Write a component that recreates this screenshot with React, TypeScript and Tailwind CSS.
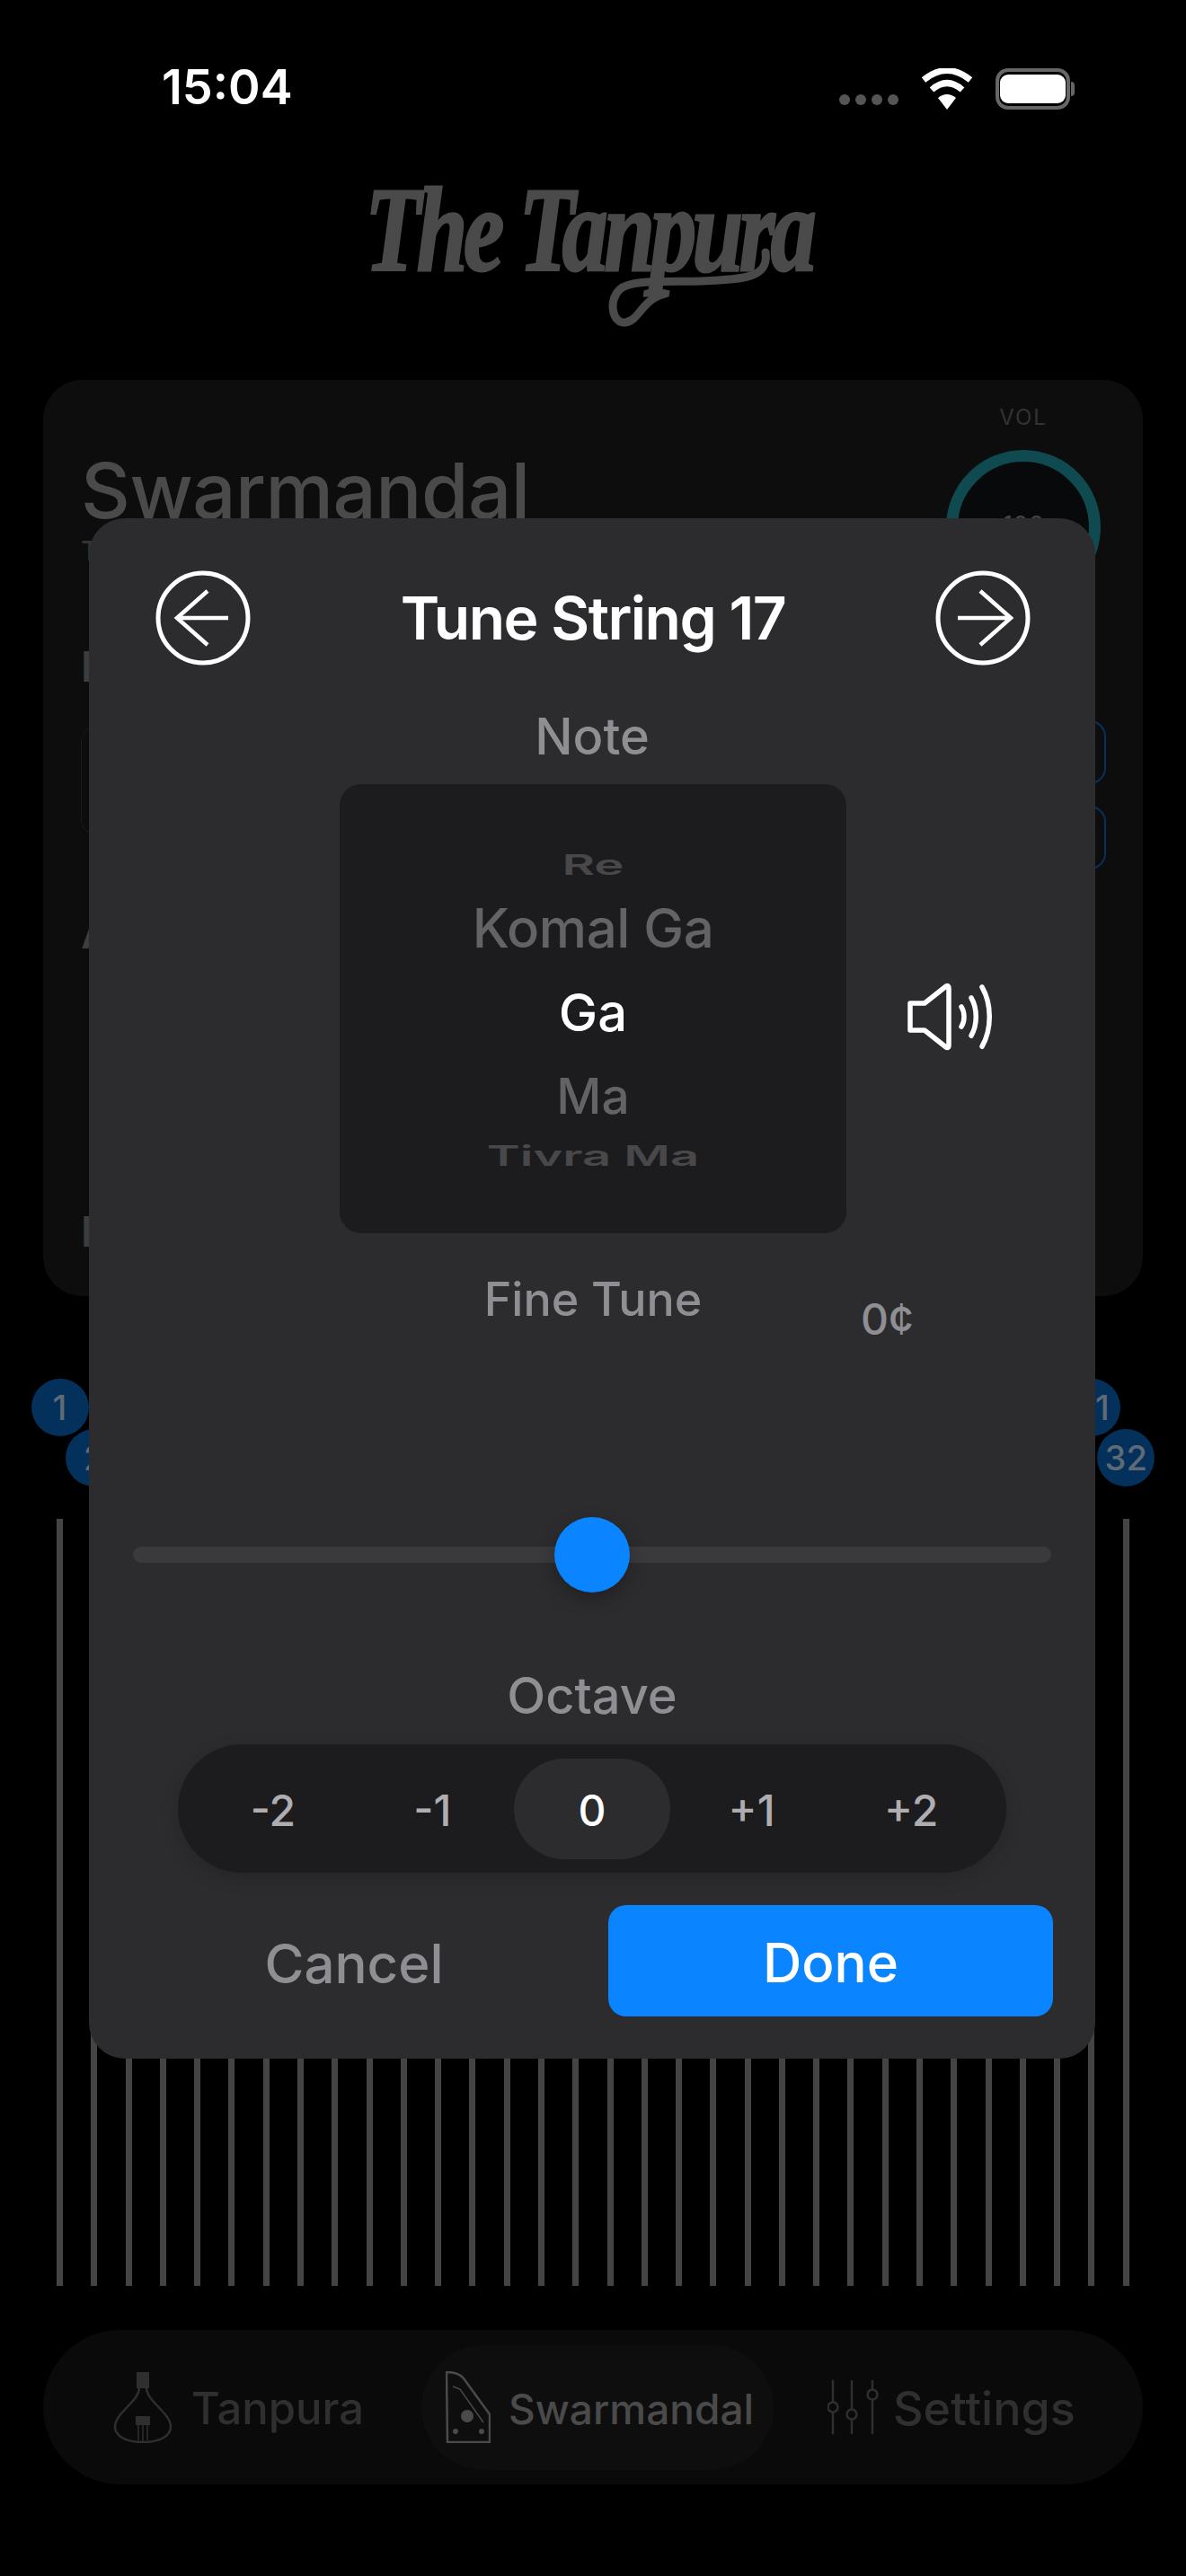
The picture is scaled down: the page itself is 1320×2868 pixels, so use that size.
const SANS = "font-['Inter','Noto_Sans',sans-serif]";

const STRINGS = Array.from({ length: 32 }, (_, i) => i + 1);
const OCTAVES = ["-2", "-1", "0", "+1", "+2"];

function StatusBar() {
  return (
    <div className="flex h-[190px] items-start justify-between pl-[180px] pr-[124px] pt-[68px]">
      <span className="text-[54px] font-semibold leading-[58px] text-white">15:04</span>
      <div className="flex items-center pt-[8px]">
        <div className="mt-[24px] flex gap-[6px]">
          <span className="h-[12px] w-[12px] rounded-full bg-[#555]" />
          <span className="h-[12px] w-[12px] rounded-full bg-[#555]" />
          <span className="h-[12px] w-[12px] rounded-full bg-[#555]" />
          <span className="h-[12px] w-[12px] rounded-full bg-[#555]" />
        </div>
        <svg width="58" height="46" viewBox="0 0 58 46" className="ml-[25px]">
          <path d="M29 46 L19 33 Q29 25 39 33 Z" fill="#fff" />
          <path d="M12 24 Q29 9 46 24" fill="none" stroke="#fff" strokeWidth="7" />
          <path d="M3 13 Q29 -8 55 13" fill="none" stroke="#fff" strokeWidth="7" />
        </svg>
        <div className="ml-[25px] flex items-center">
          <div className="flex h-[46px] w-[83px] items-center justify-center rounded-[14px] border-[4px] border-[#666]">
            <div className="h-[32px] w-[73px] rounded-[9px] bg-white" />
          </div>
          <div className="ml-[1px] h-[16px] w-[4px] rounded-r-full bg-[#666]" />
        </div>
      </div>
    </div>
  );
}

function Logo() {
  return (
    <div className="flex h-[233px] justify-center">
      <div className="relative mr-[120px] h-[190px] w-[510px]">
        <span className="block origin-center scale-x-[0.76] whitespace-nowrap pt-[7px] text-center font-['Liberation_Serif',serif] text-[134px] font-bold italic leading-[118px] tracking-[-6px] text-[#4a4a4a] [-webkit-text-stroke:3px_#4a4a4a]">
          The Tanpura
        </span>
        <svg width="240" height="120" viewBox="0 0 240 120" className="absolute left-[285px] top-[59px]">
          <path
            d="M222 32 C226 60 200 62 150 64 C110 65 72 62 60 73 C46 86 52 112 66 110 C82 108 84 84 110 78"
            fill="none"
            stroke="#4a4a4a"
            strokeWidth="9"
            strokeLinecap="round"
          />
        </svg>
      </div>
    </div>
  );
}

function BackgroundCard() {
  return (
    <div className="relative mx-12 h-[1020px] rounded-[44px] bg-[#0d0d0e] pl-[42px] pt-[82px]">
      <div className="text-[85px] font-medium leading-[84px] tracking-[-0.5px] text-[#4a4a4a]">Swarmandal</div>
      <div className="mt-[6px] text-[30px] font-medium leading-[36px] text-[#333]">Tap a string</div>
      <div className="mt-[86px] text-[46px] font-semibold leading-[50px] text-[#3d3d3d]">Pattern</div>
      <div className="mt-[42px] h-[120px] w-[300px] rounded-[16px] border border-[#1a1a1a]" />
      <div className="mt-[81px] text-[50px] font-semibold leading-[56px] text-[#3d3d3d]">Auto</div>
      <div className="mt-[280px] text-[46px] font-semibold leading-[50px] text-[#3d3d3d]">Preset</div>

      <div className="absolute right-[47px] top-[30px] flex w-[172px] flex-col items-center">
        <span className="text-[24px] leading-[24px] tracking-[2px] text-[#333]">VOL</span>
        <div className="mt-[24px] flex h-[172px] w-[172px] items-start justify-center rounded-full border-[13px] border-[#0e4a50] bg-[#08090a] pt-[50px] text-[28px] text-[#444]">
          100
        </div>
      </div>
      <div className="absolute right-[41px] top-[379px] h-[71px] w-[200px] rounded-[18px] border-[2px] border-[#07305a]" />
      <div className="absolute right-[41px] top-[474px] h-[71px] w-[200px] rounded-[18px] border-[2px] border-[#07305a]" />
    </div>
  );
}

function StringRack() {
  return (
    <div className="flex justify-between pl-[63px] pr-[63px] pt-[92px]">
      {STRINGS.map((n) => (
        <div key={n} className="flex w-[7px] flex-col items-center">
          <div className="flex h-[156px] flex-col">
            <div
              className={`flex h-[64px] w-[64px] shrink-0 items-center justify-center self-center rounded-full bg-[#04305c] text-[38px] font-medium text-[#5f6a75] ${
                n % 2 === 0 ? "mt-[56px]" : ""
              }`}
            >
              {n}
            </div>
          </div>
          <div className="h-[854px] w-[7px] shrink-0 bg-[#444]" />
        </div>
      ))}
    </div>
  );
}

function TanpuraIcon() {
  return (
    <svg width="66" height="80" viewBox="0 0 66 80" fill="none" stroke="#2f2f2f" strokeWidth="2.5">
      <rect x="26" y="1" width="14" height="18" fill="#2f2f2f" stroke="none" />
      <path d="M29 18 C29 34 2 46 2 62 C2 72 14 79 33 79 C52 79 64 72 64 62 C64 46 37 34 37 18" />
      <rect x="25" y="50" width="16" height="10" fill="#2f2f2f" stroke="none" />
      <path d="M28 60 V77 M33 60 V78 M38 60 V77" strokeWidth="1.5" />
    </svg>
  );
}

function SwarmandalIcon() {
  return (
    <svg width="50" height="80" viewBox="0 0 50 80" fill="none" stroke="#4a4a4a" strokeWidth="2.5">
      <path d="M1 1 L2 79 H49 V48 L20 8 C16 3 8 1 1 1 Z" />
      <path d="M8 17 L16 20 L42 57" strokeWidth="1.5" />
      <circle cx="24" cy="50" r="7" fill="#4a4a4a" stroke="none" />
      <circle cx="11" cy="67" r="3" fill="#4a4a4a" stroke="none" />
      <circle cx="40" cy="67" r="3" fill="#4a4a4a" stroke="none" />
    </svg>
  );
}

function SettingsIcon() {
  return (
    <svg width="58" height="60" viewBox="0 0 58 60" fill="none" stroke="#2f2f2f" strokeWidth="2.5">
      <path d="M6 0 V24 M6 36 V60 M27 0 V32 M27 44 V60 M50 0 V10 M50 22 V60" />
      <circle cx="6" cy="30" r="5.5" />
      <circle cx="27" cy="38" r="5.5" />
      <circle cx="50" cy="16" r="5.5" />
    </svg>
  );
}

function TabBar() {
  return (
    <div className="mx-12 mt-[49px] flex h-[172px] items-center rounded-[86px] bg-[#0a0a0a] pl-[78px]">
      <TanpuraIcon />
      <span className="ml-[21px] pt-[4px] text-[49px] font-medium text-[#2f2f2f]">Tanpura</span>
      <div className="ml-[64px] flex h-[139px] w-[392px] items-center rounded-[70px] bg-[#0e0e0e] pl-[27px]">
        <SwarmandalIcon />
        <span className="ml-[20px] pt-[4px] text-[46px] font-medium text-[#4a4a4a]">Swarmandal</span>
      </div>
      <div className="ml-[60px]">
        <SettingsIcon />
      </div>
      <span className="ml-[15px] pt-[4px] text-[52px] font-medium text-[#2f2f2f]">Settings</span>
    </div>
  );
}

function ArrowButton({ dir }: { dir: "left" | "right" }) {
  return (
    <svg width="106" height="106" viewBox="0 0 106 106" fill="none" stroke="#fff" strokeWidth="5">
      <circle cx="53" cy="53" r="50" />
      {dir === "left" ? (
        <path d="M81 53 H24 M58 23 L24 53 L58 83" strokeWidth="4.5" />
      ) : (
        <path d="M25 53 H84 M50 23 L84 53 L50 83" strokeWidth="4.5" />
      )}
    </svg>
  );
}

function SpeakerIcon() {
  return (
    <svg width="96" height="76" viewBox="0 0 96 76" fill="none" stroke="#fff" strokeWidth="5.5" strokeLinecap="round" strokeLinejoin="round">
      <path d="M3 23 H19 L43 4 C45 3 46 4 46 6 V70 C46 72 45 73 43 72 L19 53 H3 Z" />
      <path d="M60 27 C64 33 64 43 60 49" />
      <path d="M71 17 C78 29 78 47 71 59" />
      <path d="M83 5 C94 24 94 52 83 71" />
    </svg>
  );
}

function NotePicker() {
  return (
    <div className="flex h-[500px] flex-col items-center rounded-[24px] bg-[#1c1c1e] pt-[70px] font-medium">
      <span className="h-[40px] origin-center scale-y-[0.55] text-[56px] font-semibold leading-[40px] text-[#48484a]">Re</span>
      <span className="mt-[20px] h-[60px] text-[60px] leading-[60px] tracking-[-0.5px] text-[#636366]">Komal Ga</span>
      <span className="mt-[34px] h-[60px] text-[58px] leading-[60px] text-white">Ga</span>
      <span className="mt-[33px] h-[60px] text-[55px] leading-[60px] text-[#636366]">Ma</span>
      <span className="mt-[17px] h-[40px] origin-center scale-y-[0.55] text-[56px] font-semibold leading-[40px] text-[#48484a]">Tivra Ma</span>
    </div>
  );
}

function TuneModal() {
  return (
    <div className="absolute left-[99px] top-[577px] w-[1120px] rounded-[40px] bg-[#2c2c2e] pb-[47px] pt-[58px]">
      <div className="flex items-center justify-between pl-[74px] pr-[72px]">
        <ArrowButton dir="left" />
        <span className="text-[66px] font-semibold leading-[80px] tracking-[-1.5px] text-white">Tune String 17</span>
        <ArrowButton dir="right" />
      </div>

      <div className="mt-[49px] text-center text-[56px] font-medium leading-[60px] text-[#8e8e93]">Note</div>

      <div className="mt-[23px] grid grid-cols-[279px_564px_277px]">
        <div />
        <NotePicker />
        <div className="flex items-center pl-[68px] pt-[18px]">
          <SpeakerIcon />
        </div>
      </div>

      <div className="mt-[44px] grid h-[60px] grid-cols-[279px_564px_277px]">
        <div />
        <div className="text-center text-[52px] font-medium leading-[60px] text-[#8e8e93]">Fine Tune</div>
        <div className="pl-[16px] pt-[22px] text-[48px] font-medium leading-[60px] text-[#8e8e93]">0¢</div>
      </div>

      <div className="mx-[49px] mt-[245px] flex h-[18px] items-center justify-center rounded-full bg-[#3a3a3c]">
        <div className="h-[84px] w-[84px] shrink-0 rounded-full bg-[#0a84ff] shadow-[0_8px_20px_rgba(0,0,0,0.25)]" />
      </div>

      <div className="mt-[118px] text-center text-[56px] font-medium leading-[60px] text-[#8e8e93]">Octave</div>

      <div className="mx-[99px] mt-[24px] grid h-[143px] grid-cols-5 items-center rounded-[72px] bg-[#1c1c1e] px-[17px] shadow-[0_6px_20px_rgba(0,0,0,0.15)]">
        {OCTAVES.map((o) => (
          <div
            key={o}
            className={`mx-auto flex h-[112px] w-[174px] items-center justify-center rounded-[56px] pt-[5px] text-[48px] font-medium ${
              o === "0" ? "bg-[#2c2c2e] text-white" : "text-[#aeaeb2]"
            }`}
          >
            {o}
          </div>
        ))}
      </div>

      <div className="mt-[36px] flex items-center gap-[37px] pl-[49px] pr-[47px]">
        <div className="flex-1 pt-[6px] text-center text-[60px] font-medium text-[#8e8e93]">Cancel</div>
        <div className="flex h-[124px] w-[495px] items-center justify-center rounded-[20px] bg-[#0a84ff] pt-[4px] text-[60px] font-medium text-white">
          Done
        </div>
      </div>
    </div>
  );
}

export default function App() {
  return (
    <div className={`relative h-[2868px] w-[1320px] overflow-hidden bg-black ${SANS}`}>
      <StatusBar />
      <Logo />
      <BackgroundCard />
      <StringRack />
      <TabBar />
      <TuneModal />
    </div>
  );
}
